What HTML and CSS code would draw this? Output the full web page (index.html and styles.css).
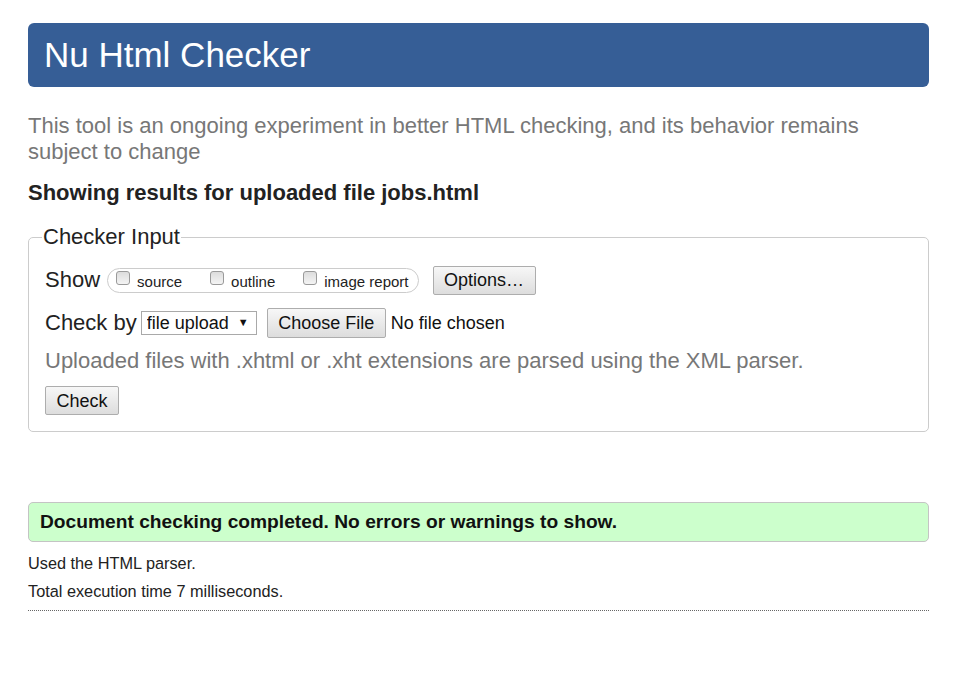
FILE: index.html
```html
<!DOCTYPE html>
<html lang="en">
<head>
<meta charset="utf-8">
<title>Nu Html Checker</title>
<link rel="stylesheet" href="styles.css">
</head>
<body>
<div class="page">
  <header class="banner"><h1 class="title">Nu Html Checker</h1></header>
  <p class="intro">This tool is an ongoing experiment in better HTML checking, and its behavior remains subject to change</p>
  <p class="showing">Showing results for uploaded file jobs.html</p>
  <form class="form">
    <fieldset class="fieldset">
      <legend class="legend">Checker Input</legend>
      <div class="row row-show">
        <span class="label">Show</span>
        <span class="pill">
          <label class="opt"><input type="checkbox" class="cb"><span>source</span></label>
          <label class="opt"><input type="checkbox" class="cb"><span>outline</span></label>
          <label class="opt"><input type="checkbox" class="cb"><span>image report</span></label>
        </span>
        <button type="button" class="btn btn-options">Options…</button>
      </div>
      <div class="row row-check">
        <span class="label">Check by</span>
        <span class="select-wrap">
          <select class="select"><option>file upload</option></select>
          <span class="arrow">▼</span>
        </span>
        <button type="button" class="btn btn-file">Choose File</button>
        <span class="nofile">No file chosen</span>
      </div>
      <p class="hint">Uploaded files with .xhtml or .xht extensions are parsed using the XML parser.</p>
      <div class="row row-submit">
        <button type="button" class="btn btn-check">Check</button>
      </div>
    </fieldset>
  </form>
  <div class="success">Document checking completed. No errors or warnings to show.</div>
  <div class="details">
    <p class="detail">Used the HTML parser.</p>
    <p class="detail">Total execution time 7 milliseconds.</p>
  </div>
</div>
</body>
</html>
```
FILE: styles.css
```css
* { box-sizing: border-box; }
html, body { margin: 0; padding: 0; background: #fff; }
body {
  font-family: "Liberation Sans", Arial, sans-serif;
  color: #222;
}
.page {
  width: 929px;
  padding: 23px 0 0 28px;
}
.banner {
  height: 64px;
  background: #365e96;
  border-radius: 6px;
  display: flex;
  align-items: center;
  padding-left: 16px;
}
.title {
  margin: 0;
  font-size: 35px;
  font-weight: normal;
  color: #fff;
  line-height: 40px;
}
.intro {
  margin: 26px 0 0;
  font-size: 22px;
  line-height: 26px;
  color: #777;
}
.showing {
  margin: 15px 0 0;
  font-size: 22px;
  line-height: 26px;
  font-weight: bold;
  color: #222;
}
.form { margin: 18px 0 0; }
.fieldset {
  margin: 0;
  border: 1px solid #ccc;
  border-radius: 5px;
  padding: 0 16px 16px 16px;
  min-width: 0;
}
.legend {
  font-size: 22px;
  line-height: 26px;
  padding: 0 1px;
  margin-left: -3px;
  color: #222;
}
.row {
  display: flex;
  align-items: center;
}
.row-show { margin-top: 15px; height: 30px; }
.row-check { margin-top: 13px; height: 30px; }
.row-submit { margin-top: 12px; }
.label {
  font-size: 22px;
  line-height: 26px;
}
.pill {
  display: flex;
  align-items: center;
  height: 25px;
  margin-left: 7px;
  padding: 0 9px 0 8px;
  border: 1px solid #ccc;
  border-radius: 13px;
  gap: 28px;
}
.opt {
  display: flex;
  align-items: center;
  font-size: 15px;
  line-height: 18px;
  color: #222;
}
.opt span { margin-left: 7px; padding-top: 4px; }
.cb {
  appearance: none;
  -webkit-appearance: none;
  margin: 0;
  width: 14px;
  height: 14px;
  border: 1px solid #9a9a9a;
  border-radius: 3px;
  background: linear-gradient(#dcdcdc, #f4f4f4);
  position: relative;
  top: -2px;
}
.btn {
  font-family: "Liberation Sans", Arial, sans-serif;
  font-size: 18px;
  color: #111;
  background: linear-gradient(#f7f7f7, #dddddd);
  border: 1px solid #adadad;
  border-radius: 2px;
  padding: 0;
  line-height: 20px;
}
.btn-options {
  margin-left: 14px;
  width: 103px;
  height: 29px;
}
.select-wrap {
  position: relative;
  margin-left: 4px;
  display: inline-flex;
}
.select {
  appearance: none;
  -webkit-appearance: none;
  width: 116px;
  height: 24px;
  font-family: "Liberation Sans", Arial, sans-serif;
  font-size: 18px;
  color: #111;
  background: #fff;
  border: 1px solid #a9a9a9;
  border-radius: 0;
  padding: 0 0 0 5px;
  margin: 0;
}
.arrow {
  position: absolute;
  right: 8px;
  top: 5px;
  font-size: 11px;
  line-height: 12px;
  color: #111;
  pointer-events: none;
}
.btn-file {
  margin-left: 10px;
  width: 119px;
  height: 30px;
}
.nofile {
  margin-left: 5px;
  font-size: 18px;
  color: #111;
}
.hint {
  margin: 10px 0 0;
  font-size: 22px;
  line-height: 26px;
  color: #777;
}
.btn-check {
  width: 74px;
  height: 29px;
}
.success {
  margin-top: 70px;
  height: 40px;
  background: #ccffcc;
  border: 1px solid #c4c4c4;
  border-radius: 5px;
  padding-left: 11px;
  display: flex;
  align-items: center;
  font-size: 19.2px;
  font-weight: bold;
  color: #111;
}
.details {
  margin-top: 7px;
  padding-bottom: 5px;
  border-bottom: 1px dotted #666;
}
.detail {
  margin: 0;
  font-size: 16.3px;
  line-height: 28px;
  color: #222;
}
```
